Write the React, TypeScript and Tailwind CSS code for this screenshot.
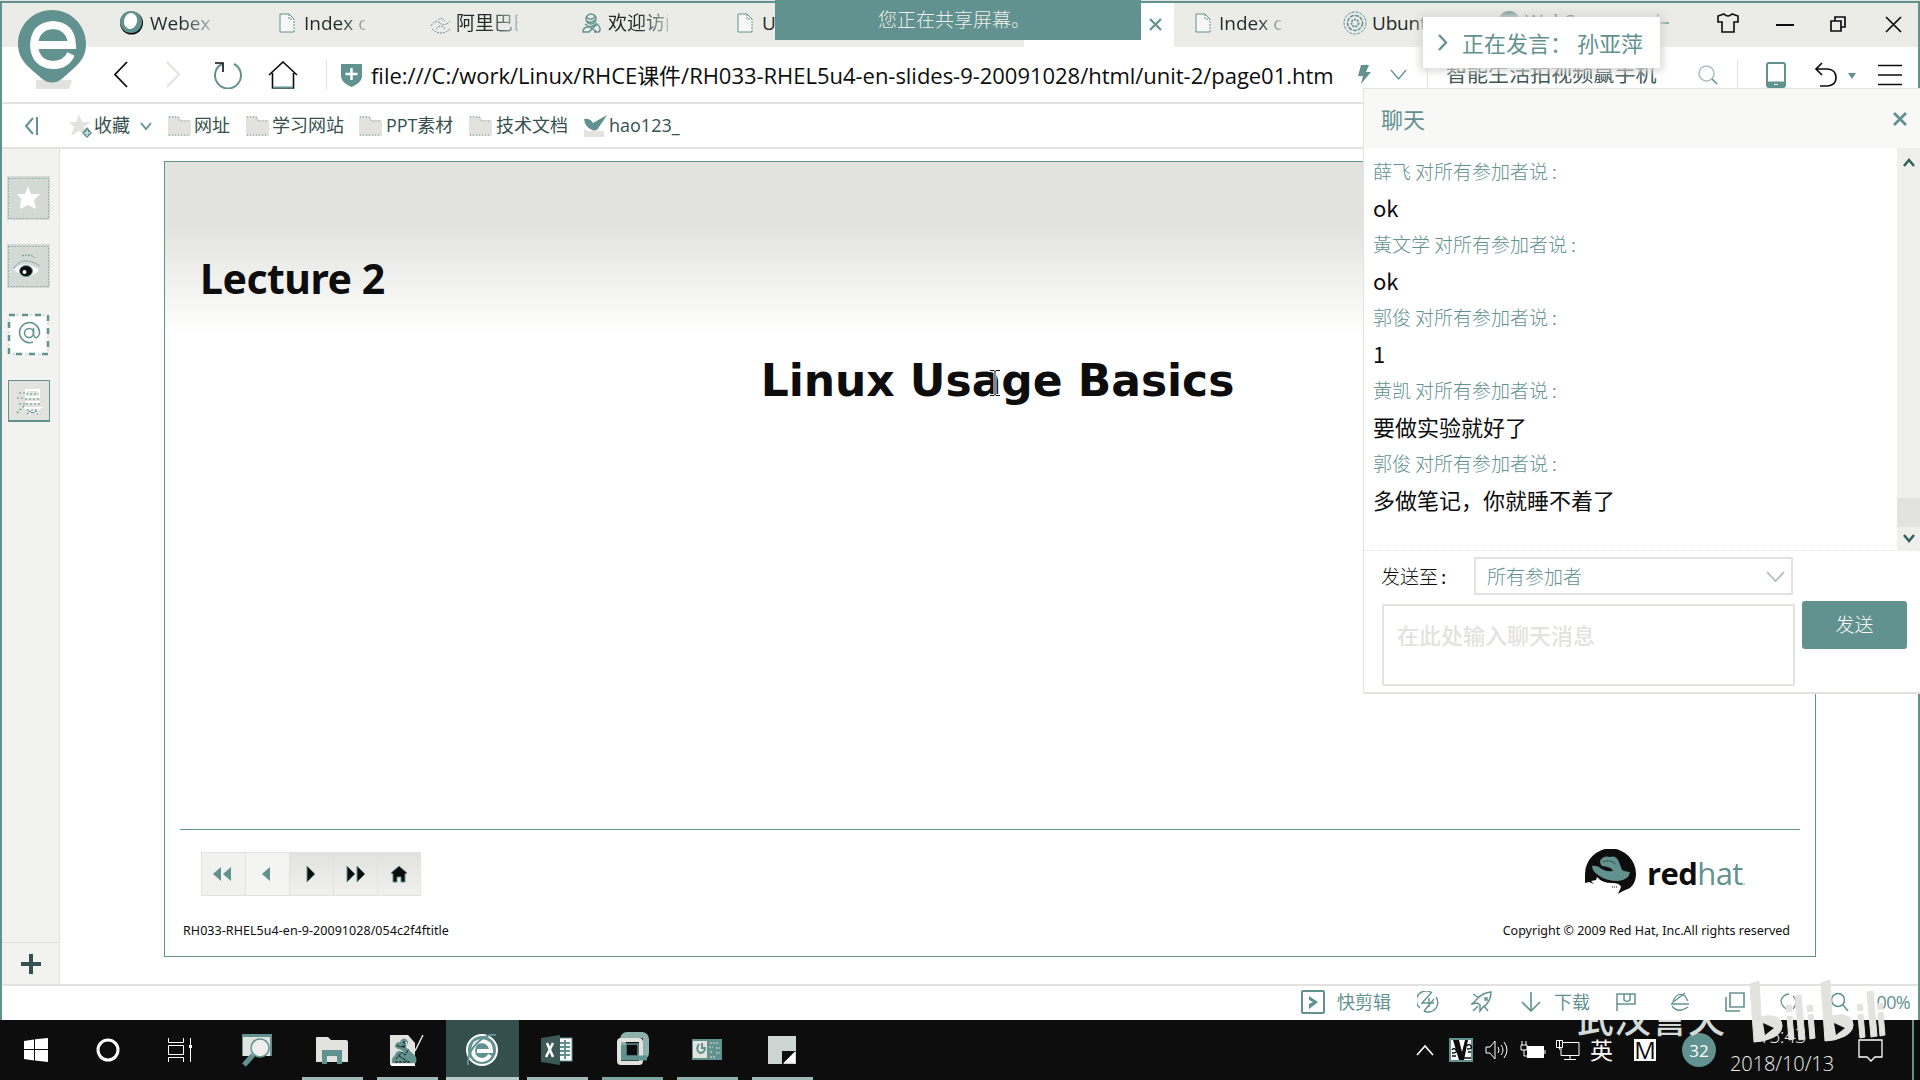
import React from "react";

const UI = "font-['Open_Sans','Noto_Sans_CJK_SC',sans-serif]";
const CJK = "font-['Noto_Sans_CJK_SC',sans-serif]";

const TEAL = "#61928f";
const PALE = "#e2e2de";
const INK = "#0d0d0d";

function Svg({ w, h, className = "", children }: { w: number; h: number; className?: string; children: React.ReactNode }) {
  return (
    <svg width={w} height={h} viewBox={`0 0 ${w} ${h}`} fill="none" className={`block shrink-0 ${className}`}>
      {children}
    </svg>
  );
}

function PageIcon({ className = "" }: { className?: string }) {
  return (
    <Svg w={16} h={20} className={className}>
      <path d="M1 1h9l5 5v13H1z" fill="#f7f7f6" />
      <path d="M1 1v18h14M1 1h9" stroke={TEAL} />
      <path d="M10 1v5h5v13" stroke={TEAL} strokeDasharray="2 1" />
      <path d="M10 1l5 5" stroke={TEAL} />
    </Svg>
  );
}

function Folder({ className = "" }: { className?: string }) {
  return (
    <Svg w={23} h={20} className={className}>
      <path d="M0 0h11l2 4h10v16H0z" fill={PALE} />
      <path d="M1 1h9l2 4h10M1 19h21" stroke={TEAL} strokeDasharray="1 2" />
    </Svg>
  );
}

function TabStrip() {
  return (
    <div className="flex h-[44px] shrink-0 items-stretch bg-[#ebebe8] text-[19px] text-[#1f2a29] whitespace-nowrap">
      <div className="ml-[117px] flex w-[159px] items-start">
        <Svg w={25} h={24} className="mt-[8px]">
          <circle cx="12.500" cy="12" r="11.500" fill={INK} />
          <circle cx="12" cy="11" r="11" fill={TEAL} />
          <ellipse cx="11.500" cy="10" rx="6.500" ry="8" fill="#fff" transform="rotate(15 11.500 10)" />
        </Svg>
        <span className="ml-[6px] mt-[7px] w-[61px] overflow-hidden bg-gradient-to-r from-[#1f2a29] from-50% to-[#a9bfbd] bg-clip-text leading-[26px] text-transparent">Webex</span>
      </div>
      <div className="flex w-[150px] items-start">
        <PageIcon className="ml-[1px] mt-[10px]" />
        <span className="ml-[9px] mt-[7px] w-[61px] overflow-hidden bg-gradient-to-r from-[#1f2a29] from-60% to-[#a9bfbd] bg-clip-text leading-[26px] text-transparent">Index of</span>
      </div>
      <div className="flex w-[153px] items-start">
        <Svg w={22} h={18} className="ml-[2px] mt-[14px]">
          <path d="M2 12q9 8 18 0M1 9q4-7 9-3t10-2M6 12q5-6 9 0M8 3q4-4 7 2" stroke={TEAL} strokeDasharray="2 1" />
        </Svg>
        <span className="ml-[4px] mt-[6px] w-[62px] overflow-hidden bg-gradient-to-r from-[#1f2a29] from-50% to-[#a9bfbd] bg-clip-text leading-[28px] text-transparent">阿里巴巴</span>
      </div>
      <div className="flex w-[156px] items-start">
        <Svg w={20} h={21} className="mt-[10px]">
          <circle cx="10" cy="6" r="5" stroke={TEAL} strokeWidth="1.500" />
          <path d="M5 4q5 5 10-1M6 8q4 3 8-1M4 11l12 8M16 10q-4 4-9 4-5 0-5 5h6l8-8q5 4 2 8h-5" stroke={TEAL} strokeWidth="1.500" />
        </Svg>
        <span className="ml-[7px] mt-[6px] w-[60px] overflow-hidden bg-gradient-to-r from-[#1f2a29] from-50% to-[#a9bfbd] bg-clip-text leading-[28px] text-transparent">欢迎访问</span>
      </div>
      <div className="flex w-[287px] items-start">
        <PageIcon className="mt-[10px]" />
        <span className="ml-[9px] mt-[7px] leading-[26px]">U</span>
      </div>
      <div className="flex w-[150px] items-start justify-end bg-white">
        <Svg w={13} h={13} className="mr-[12px] mt-[15px]">
          <path d="M1 1l11 11M12 1L1 12" stroke={TEAL} strokeWidth="2.200" />
        </Svg>
      </div>
      <div className="flex w-[168px] items-start">
        <PageIcon className="ml-[21px] mt-[10px]" />
        <span className="ml-[8px] mt-[7px] w-[62px] overflow-hidden bg-gradient-to-r from-[#1f2a29] from-60% to-[#a9bfbd] bg-clip-text leading-[26px] text-transparent">Index of</span>
      </div>
      <div className="flex w-[156px] items-start">
        <Svg w={24} h={24} className="mt-[8px] ml-[1px]">
          <circle cx="12" cy="12" r="11" stroke={TEAL} strokeDasharray="3 1" />
          <circle cx="12" cy="12" r="7.500" stroke={TEAL} strokeWidth="1.500" strokeDasharray="4 1" />
          <circle cx="12" cy="12" r="3.500" stroke={TEAL} strokeWidth="2" strokeDasharray="2 1" />
        </Svg>
        <span className="ml-[5px] mt-[7px] leading-[26px] tracking-[-0.200px]">Ubunt</span>
      </div>
      <div className="flex w-[155px] items-start">
        <Svg w={22} h={22} className="mt-[8px]">
          <circle cx="11" cy="11" r="11" fill={TEAL} />
        </Svg>
        <span className="ml-[5px] mt-[5px] leading-[26px]">WebSer</span>
      </div>
      <Svg w={16} h={20} className="mt-[8px]">
        <path d="M0 12h16M5 3v17" stroke={TEAL} strokeWidth="1.500" />
      </Svg>
      <Svg w={22} h={20} className="ml-[48px] mt-[10px]">
        <path d="M7 1q4 4 8 0l6 2v6h-4v10H5V9H1V3z" stroke={INK} strokeWidth="1.600" />
      </Svg>
      <Svg w={18} h={20} className="ml-[37px] mt-[12px]">
        <path d="M0 10h18" stroke={INK} strokeWidth="2" />
      </Svg>
      <Svg w={16} h={16} className="ml-[36px] mt-[13px]">
        <path d="M1 5h10v10H1zM5 5V1h10v10h-4" stroke={INK} strokeWidth="1.700" />
      </Svg>
      <Svg w={17} h={17} className="ml-[39px] mt-[13px]">
        <path d="M1 1l15 15M16 1L1 16" stroke={INK} strokeWidth="1.700" />
      </Svg>
    </div>
  );
}

function AddressBar() {
  return (
    <div className="flex h-[57px] shrink-0 items-center border-b-2 border-[#e2e2de] bg-white whitespace-nowrap">
      <Svg w={15} h={27} className="ml-[111px]">
        <path d="M14 1L2 13.500L14 26" stroke={INK} strokeWidth="1.800" />
      </Svg>
      <Svg w={15} h={27} className="ml-[38px]">
        <path d="M1 1l12 12.500L1 26" stroke={PALE} strokeWidth="2" />
      </Svg>
      <Svg w={30} h={28} className="ml-[32px]">
        <path d="M9 3A13 13 0 1 0 21 3" stroke={TEAL} strokeWidth="2" />
        <path d="M2 2h8v9" stroke={INK} strokeWidth="1.600" />
      </Svg>
      <Svg w={30} h={28} className="ml-[25px]">
        <path d="M1 14L15 1l14 13M4.500 12v15h21V12" stroke={INK} strokeWidth="1.600" />
        <path d="M5 26.500h20" stroke={TEAL} strokeWidth="2" />
      </Svg>
      <div className="ml-[28px] h-[30px] w-px bg-[#e2e2de]" />
      <Svg w={21} h={24} className="ml-[14px]">
        <path d="M0 1h21v13q-1 6-10.500 10Q1 20 0 14z" fill={TEAL} />
        <path d="M10.500 5v12M4.500 11h12" stroke="#fff" strokeWidth="2.500" />
      </Svg>
      <span className="ml-[9px] w-[986px] text-[22px] leading-[30px] tracking-[-0.030px] text-[#0d0d0d]">
        file:///C:/work/Linux/RHCE课件/RH033-RHEL5u4-en-slides-9-20091028/html/unit-2/page01.htm
      </span>
      <Svg w={15} h={20}>
        <path d="M4 0h8L9 7h5L4 19l2-8H1z" fill={TEAL} />
      </Svg>
      <Svg w={17} h={12} className="ml-[18px]">
        <path d="M1 1l7.500 9L16 1" stroke={TEAL} strokeWidth="1.300" />
      </Svg>
      <div className="ml-[20px] h-[30px] w-px bg-[#e2e2de]" />
      <span className="ml-[18px] w-[231px] text-[21px] leading-[28px] tracking-[0.050px] text-[#3d5554]">
        <span className="relative -top-[2px]">智能生活拍视频赢手机</span>
      </span>
      <Svg w={20} h={20} className="ml-[21px]">
        <circle cx="8.500" cy="8.500" r="7.500" stroke="#a9bfbd" strokeWidth="1.500" />
        <path d="M14 14l5 5" stroke={TEAL} strokeWidth="1.600" />
      </Svg>
      <div className="ml-[19px] h-[30px] w-px bg-[#e2e2de]" />
      <Svg w={20} h={26} className="ml-[28px]">
        <rect x="1" y="1" width="18" height="24" rx="2" stroke={TEAL} strokeWidth="2" />
        <path d="M1 22h18" stroke={TEAL} strokeWidth="5" />
        <path d="M8 22.500h4" stroke="#fff" />
      </Svg>
      <Svg w={24} h={25} className="ml-[28px]">
        <path d="M8 1L2 7l6 6M2 7h12q8 1 8 8.500T14 24H6" stroke={INK} strokeWidth="1.700" />
      </Svg>
      <Svg w={8} h={7} className="ml-[10px] mt-[4px]">
        <path d="M0 0h8L4 6z" fill={TEAL} />
      </Svg>
      <Svg w={24} h={22} className="ml-[22px]">
        <path d="M0 1.500h24M0 11h24M0 20.500h24" stroke={INK} strokeWidth="1.700" />
      </Svg>
    </div>
  );
}

function Bookmarks() {
  return (
    <div className="flex h-[45px] shrink-0 items-center border-b-2 border-[#e2e2de] bg-white text-[18px] whitespace-nowrap text-[#35504e]">
      <Svg w={15} h={18} className="ml-[22px]">
        <path d="M9 1L2 9l7 8" stroke={TEAL} strokeWidth="2" />
        <path d="M13 0v18" stroke={TEAL} strokeWidth="2" />
      </Svg>
      <Svg w={24} h={24} className="ml-[30px]">
        <path d="M10 0l3 8h9l-7 5 3 9-8-5-8 5 3-9-5-5h7z" fill={PALE} />
        <path d="M18 13l5 6-5 5-5-5z" fill={TEAL} />
        <path d="M18 16v6M15 19h6" stroke="#fff" />
      </Svg>
      <span className="ml-[1px] w-[37px]">收藏</span>
      <Svg w={12} h={9} className="ml-[9px] mt-[2px]">
        <path d="M1 1l5 6 5-6" stroke={TEAL} strokeWidth="1.800" />
      </Svg>
      <Folder className="ml-[16px]" />
      <span className="ml-[3px] w-[37px]">网址</span>
      <Folder className="ml-[15px]" />
      <span className="ml-[3px] w-[73px]">学习网站</span>
      <Folder className="ml-[14px]" />
      <span className="ml-[4px] w-[68px] tracking-[-0.100px]">PPT素材</span>
      <Folder className="ml-[15px]" />
      <span className="ml-[4px] w-[73px]">技术文档</span>
      <Svg w={24} h={22} className="ml-[14px]">
        <path d="M1 14l3 2h17v6H1z" fill={PALE} />
        <path d="M1 4q6-1 9 4L24 0q-3 5-6 9l-2 3q-2 5-7 3Q2 12 1 4z" fill={TEAL} />
      </Svg>
      <span className="ml-[2px]">hao123_</span>
    </div>
  );
}

function Sidebar() {
  return (
    <div className="flex w-[58px] shrink-0 flex-col items-start border-r border-[#e2e2de] bg-[#f2f2f0] pl-[5px]">
      <Svg w={44} h={44} className="mt-[27px]">
        <rect width="43" height="44" fill="#d3dad6" />
        <rect x="1.500" y="2.500" width="40" height="40" stroke={TEAL} strokeDasharray="1 2" />
        <path d="M21 10l3 8h9l-6 6 2 9-8-4-8 4 1-10-4-5h8z" fill="#fff" />
      </Svg>
      <Svg w={44} h={44} className="mt-[24px]">
        <rect width="43" height="44" fill="#d3dad6" />
        <rect x="1.500" y="2.500" width="40" height="40" stroke={TEAL} strokeDasharray="1 2" />
        <path d="M7 26q10-11 25 0-10 12-25 0z" fill="#fff" />
        <path d="M7 24q8-13 26-2M15 12q9-3 14 3" stroke={TEAL} strokeDasharray="2 1" />
        <ellipse cx="19" cy="27" rx="6.500" ry="5.500" fill={INK} stroke={TEAL} />
        <circle cx="17.500" cy="28" r="2" fill="#fff" />
      </Svg>
      <Svg w={44} h={44} className="mt-[24px]">
        <rect x="2" y="3" width="39" height="39" fill="#fff" stroke={TEAL} strokeWidth="2.500" strokeDasharray="6 7" />
        <rect x="2" y="3" width="39" height="39" stroke={PALE} strokeWidth="2.500" strokeDasharray="3 10" strokeDashoffset="-7" />
        <circle cx="22" cy="21" r="4.500" stroke={TEAL} strokeWidth="1.500" />
        <path d="M26.500 16v7q3 6 6-1V20A10 10 0 1 0 26 30" stroke={TEAL} strokeWidth="1.500" />
      </Svg>
      <Svg w={44} h={44} className="mt-[23px]">
        <rect x="1.500" y="1.500" width="41" height="41" fill="#e2e2de" stroke={TEAL} />
        <path d="M1 42h42" stroke={TEAL} strokeWidth="2" />
        <path d="M19 11h13v7H19zM19 23h14M17 29h16l-12 7M20 29l12 7" stroke="#fff" strokeWidth="2" />
        <path d="M12 14h6M10 19h7M12 25h6M10 34l7-7M19 15h13M18 20h15M19 25h14M20 31h12M20 35l10-3M22 32l11 4" stroke={TEAL} strokeWidth="1.200" strokeDasharray="2 2" />
      </Svg>
      <div className="-ml-[5px] mt-auto flex h-[42px] w-[57px] items-center border-t border-[#e2e2de] pl-[19px]">
        <Svg w={20} h={20}>
          <path d="M10 0v20M0 10h20" stroke="#35504e" strokeWidth="4" />
        </Svg>
      </div>
    </div>
  );
}

function Slide() {
  return (
    <div className="mt-[12px] ml-[104px] flex h-[796px] w-[1652px] flex-col border border-[#61928f] bg-white">
      <div className="flex h-[175px] items-start bg-gradient-to-b from-[#e2e2de] from-35% to-white pl-[35px]">
        <h1 className="mt-[86px] font-['Noto_Sans'] text-[41px] leading-[60px] font-bold tracking-[-0.500px] whitespace-nowrap text-[#0d0d0d]">Lecture 2</h1>
      </div>
      <h2 className="mt-[14px] pl-[15px] text-center font-['DejaVu_Sans'] text-[44px] leading-[60px] font-bold tracking-[-0.050px] whitespace-nowrap text-[#0d0d0d]">
        Linux Usage Basics
      </h2>
      <div className="mx-[15px] mt-auto h-px bg-[#61928f]" />
      <div className="mt-[18px] flex justify-between">
        <div className="mt-[4px] ml-[36px] flex h-[44px] w-[220px] gap-[1px] bg-[#e2e2de] p-[1px]">
          <div className="flex w-[43px] items-center justify-center bg-[#f1f1ef] pr-[3px]">
            <Svg w={18} h={14}><path d="M8 0v14L0 7zM18 0v14l-8-7z" fill={TEAL} /></Svg>
          </div>
          <div className="flex w-[43px] items-center justify-center bg-[#f4f4f2] pr-[3px]">
            <Svg w={8} h={14}><path d="M8 0v14L0 7z" fill={TEAL} /></Svg>
          </div>
          <div className="flex w-[43px] items-center justify-center bg-gradient-to-b from-[#e2e2de] to-[#f0f0ee] pr-[2px]">
            <Svg w={10} h={16}><path d="M1 0v16l8-8z" fill={INK} stroke={TEAL} /></Svg>
          </div>
          <div className="flex w-[43px] items-center justify-center bg-gradient-to-b from-[#e2e2de] to-[#f0f0ee]">
            <Svg w={20} h={16}><path d="M1 0v16l8-8zM11 0v16l8-8z" fill={INK} stroke={TEAL} /></Svg>
          </div>
          <div className="flex w-[42px] items-center justify-center bg-gradient-to-b from-[#e2e2de] to-[#f0f0ee]">
            <Svg w={18} h={18}><path d="M9 1l8 7-2 1v8h-4v-5H7v5H3V9L1 8z" fill={INK} stroke={TEAL} /></Svg>
          </div>
        </div>
        <div className="mr-[74px] flex h-[48px] items-start">
          <Svg w={52} h={46} className="mt-[1px]">
            <path d="M0 34V25A25.500 25.500 0 0 1 51 25q0 9-6 14l-7 3-5 3 3-7q-1-4-9-4-10 0-15-6l-1 3-5 1 3 3-5-2z" fill={INK} />
            <path d="M15 12q3-6 10-4 6-2 9 5l3 8q4 2 8 2-1 8-12 9-12 0-20-6-6-4-6-9 3-1 7 1 5 5 14 4-1-4-11-5-2-2-2-5z" fill={TEAL} />
            <path d="M18 13q6-3 13 2M27 38h6" stroke={INK} strokeWidth="1" strokeDasharray="1 1" />
          </Svg>
          <div className="mt-[3px] ml-[10px] w-[94px] font-['Open_Sans'] text-[31px] leading-[44px] tracking-[-0.600px] whitespace-nowrap">
            <span className="font-bold text-[#0d0d0d]">red</span>
            <span className="text-[#61928f]">hat</span>
            <span className="text-[10px] text-[#61928f]">.</span>
          </div>
        </div>
      </div>
      <div className="mt-[23px] mb-[13px] flex justify-between pr-[25px] pl-[18px] font-['Noto_Sans'] text-[12.500px] leading-[24px] whitespace-nowrap text-[#0d0d0d]">
        <span className="tracking-[0.050px]">RH033-RHEL5u4-en-9-20091028/054c2f4ftitle</span>
        <span>Copyright © 2009 Red Hat, Inc.All rights reserved</span>
      </div>
    </div>
  );
}

function StatusBar() {
  return (
    <div className="flex h-[36px] shrink-0 items-center border-t-2 border-[#e2e2de] bg-white pb-[2px] text-[18px] whitespace-nowrap text-[#61928f]">
      <Svg w={24} h={24} className="ml-[1299px]">
        <rect x="1" y="1" width="22" height="22" rx="1" stroke={TEAL} strokeWidth="2" />
        <path d="M8 6l9 6-9 7v-5l4-2-4-2z" fill={TEAL} />
      </Svg>
      <span className="ml-[12px] w-[56px]">快剪辑</span>
      <Svg w={22} h={22} className="ml-[24px]">
        <path d="M15 2A9.500 9.500 0 0 0 3 17M19 6A9.500 9.500 0 0 1 7 20M15 1L5 12h7M7 20l10-12M12 7v9M9 12h8" stroke={TEAL} strokeWidth="1.400" />
      </Svg>
      <Svg w={22} h={22} className="ml-[32px]">
        <path d="M6 8Q11 2 20 1q0 10-8 15l-3 4v-6l-3-2-5 1 5-5M7 15l-5 5M14 7h2v2h-2zM2 3l6 4M13 15l4 5" stroke={TEAL} strokeWidth="1.500" />
      </Svg>
      <Svg w={20} h={20} className="ml-[28px]">
        <path d="M10 0v18M1 10l9 9 9-9" stroke={TEAL} strokeWidth="1.600" />
      </Svg>
      <span className="ml-[13px] w-[38px]">下载</span>
      <Svg w={20} h={18} className="ml-[24px]">
        <path d="M1 18V1h18v10H1M8 1v6q3 3 6 0V1" stroke={TEAL} strokeWidth="1.500" />
      </Svg>
      <Svg w={22} h={20} className="ml-[33px]">
        <path d="M19 15Q9 22 3 14M4 9Q9-1 16 4l3 5M2 12h18M3 11L16 1" stroke={TEAL} strokeWidth="1.300" />
      </Svg>
      <Svg w={20} h={20} className="ml-[34px]">
        <path d="M5 1h14v14H5zM1 5v14h14" stroke={TEAL} strokeWidth="1.600" />
      </Svg>
      <Svg w={22} h={20} className="ml-[35px]">
        <path d="M9 2Q2 3 1 9q1 7 8 9M13 4q6 6 0 13" stroke={TEAL} strokeWidth="1.300" />
      </Svg>
      <Svg w={20} h={20} className="ml-[28px]">
        <circle cx="8" cy="8" r="6.500" stroke={TEAL} strokeWidth="1.500" />
        <path d="M13 13l5 6" stroke={TEAL} strokeWidth="1.500" />
      </Svg>
      <span className="ml-[17px] tracking-[-0.700px]">100%</span>
    </div>
  );
}

const messages = [
  { from: "薛飞", text: "ok" },
  { from: "黃文学", text: "ok" },
  { from: "郭俊", text: "1" },
  { from: "黄凯", text: "要做实验就好了" },
  { from: "郭俊", text: "多做笔记，你就睡不着了" },
];

function ChatPanel() {
  return (
    <div className="absolute top-[88px] left-[1363px] flex h-[606px] w-[557px] flex-col border-b-2 border-l border-t border-[#e2e2de] bg-white font-['Noto_Sans_CJK_SC',sans-serif]">
      <div className="flex h-[59px] shrink-0 items-center justify-between bg-[#f8f8f7] pr-[13px] pl-[17px]">
        <span className="-mt-[1px] text-[22px] leading-[30px] text-[#61928f]">聊天</span>
        <Svg w={14} h={14} className="mt-[1px]">
          <path d="M1 1l12 12M13 1L1 13" stroke={TEAL} strokeWidth="2.800" />
        </Svg>
      </div>
      <div className="flex h-[402px] shrink-0">
        <div className="flex flex-1 flex-col pt-[5px] pl-[9px] whitespace-nowrap">
          {messages.map((m, i) => (
            <div key={i} className="h-[73px] shrink-0">
              <div className="h-[36px] text-[19px] leading-[36px] font-light text-[#61928f]">
                {m.from}
                <span className="ml-[4px]">对所有参加者说</span>
                <span className="ml-[4px]">:</span>
              </div>
              <div className="h-[37px] text-[22px] leading-[37px] text-[#0d0d0d]">{m.text}</div>
            </div>
          ))}
        </div>
        <div className="flex w-[23px] flex-col items-center bg-[#efefed]">
          <Svg w={12} h={9} className="mt-[10px]">
            <path d="M1 8l5-6 5 6" stroke="#35605d" strokeWidth="2.500" />
          </Svg>
          <div className="mt-auto h-[29px] w-full bg-[#e2e2de]" />
          <Svg w={12} h={9} className="mt-[7px] mb-[7px]">
            <path d="M1 1l5 6 5-6" stroke="#35605d" strokeWidth="2.500" />
          </Svg>
        </div>
      </div>
      <div className="border-t border-dotted border-[#e2e2de] pt-[6px] pl-[18px] text-[19px] whitespace-nowrap">
        <div className="flex h-[38px] items-center">
          <span className="w-[92px] text-[#0d0d0d]"><span className="-ml-[1px] font-light">发送至</span><span className="ml-[3px]">:</span></span>
          <div className="flex h-[38px] w-[319px] items-center justify-between border-2 border-[#e2e2de] pr-[6px] pl-[11px]">
            <span className="font-light text-[#61928f]">所有参加者</span>
            <Svg w={19} h={11}>
              <path d="M1 1l8.500 9L18 1" stroke="#a9bfbd" strokeWidth="1.800" />
            </Svg>
          </div>
        </div>
        <div className="mt-[6px] flex items-start">
          <div className="mt-[3px] flex h-[82px] w-[413px] items-start rounded-[2px] border-2 border-[#e2e2de] pt-[12px] pl-[13px] text-[22px] leading-[32px] font-medium text-[#e2e2de]">
            在此处输入聊天消息
          </div>
          <div className="ml-[7px] flex h-[48px] w-[105px] items-center justify-center rounded-[3px] bg-[#61928f] pb-[1px] font-light text-white">发送</div>
        </div>
      </div>
    </div>
  );
}

function Watermark() {
  return (
    <div className="pointer-events-none absolute top-[980px] left-[1577px] flex items-start">
      <div className="mt-[40px] h-[24px] w-[153px] overflow-hidden">
        <div className={`-mt-[31px] text-[37px] leading-[56px] font-medium whitespace-nowrap text-[#d3dad7] ${CJK}`}>武汉誉天</div>
      </div>
      <Svg w={136} h={64} className="ml-[20px]">
        <g fill={PALE} stroke={PALE} strokeLinejoin="round">
          <path d="M0 4l9-3 2 36q14-4 20 4 4 10-7 16-10 5-20 5z" />
          <path d="M71 3l9-3 2 36q14-4 20 4 4 10-7 16-10 5-20 5z" />
          <path d="M37 37l5-1 2 23-5 1zM45 16l6-1 4 44-6 1zM58 35l5-1 2 24-5 1zM36 26l5-1 1 6-5 1zM57 26l5-1 1 6-5 1zM108 35l5-1 2 23-5 1zM117 12l6-1 4 45-6 1zM128 33l5-1 2 23-5 1zM107 25l5-1 1 6-5 1zM127 24l5-1 1 6-5 1z" />
        </g>
        <path d="M13 43l11 5-9 7zM84 43l11 5-9 7z" fill={INK} />
      </Svg>
    </div>
  );
}

function Taskbar() {
  return (
    <div className="flex h-[60px] w-full shrink-0 items-stretch bg-[#0d0d0d] text-white">
      <div className="flex w-[295px] items-center">
        <Svg w={24} h={24} className="ml-[24px]">
          <path d="M0 3l10-1.500V11H0zM11 1.300L24 0v11H11zM0 12h10v10.500L0 21zM11 12h13v12l-13-1.500z" fill="#fff" />
        </Svg>
        <Svg w={24} h={24} className="ml-[48px]">
          <circle cx="12" cy="12" r="10" stroke="#fff" strokeWidth="3" />
        </Svg>
        <Svg w={26} h={24} className="ml-[48px]">
          <path d="M.5 0v4.500h15V0M.5 24v-4.500h15V24M.5 7.500h15v9H.5zM22.500 0v24" stroke="#fff" />
          <rect x="21" y="7" width="3" height="3" fill="#fff" />
        </Svg>
        <Svg w={32} h={34} className="ml-[48px]">
          <rect x="0" y="1" width="30" height="22" fill={TEAL} />
          <rect x="1" y="4" width="27" height="19" fill={PALE} />
          <circle cx="18" cy="15" r="9" fill="#eeeeec" stroke={TEAL} strokeWidth="1.500" />
          <path d="M11 22L2 32" stroke={TEAL} strokeWidth="5" />
        </Svg>
      </div>
      <div className="ml-[7px] flex w-[61px] flex-col items-center justify-between">
        <Svg w={32} h={28} className="mt-[16px] mr-[2px]">
          <path d="M0 2q0-1 1-1h11l3 3h15q2 0 2 2v20H0z" fill={PALE} />
          <path d="M6 28V14h20v14h-5v-8H11v8z" fill={TEAL} />
        </Svg>
        <div className="h-[3px] w-full bg-[#a2bab7]" />
      </div>
      <div className="ml-[14px] flex w-[61px] flex-col items-center justify-between">
        <Svg w={34} h={32} className="mt-[15px] mr-[1px]">
          <path d="M0 0h18l7 8v22H0z" fill={PALE} />
          <path d="M5 12q0-5 5-5 2-5 6-3 4 3 0 8l5 5q7 4 5 11H2q-1-5 3-8 1-4 5-4z" fill={TEAL} />
          <path d="M7 10q3 3 7 1M6 24l6-7 3 3 4-6M14 6v7M5 27h15M9 21l8 5" stroke={INK} strokeDasharray="3 1" />
          <path d="M8 14l5 3M16 7l2 6" stroke="#fff" />
          <path d="M33 0l-8 16" stroke={PALE} strokeWidth="1.500" />
          <path d="M1 30h24" stroke="#fff" strokeWidth="2" />
        </Svg>
        <div className="h-[3px] w-full bg-[#a2bab7]" />
      </div>
      <div className="ml-[8px] flex w-[73px] flex-col items-center justify-between bg-[#354f4d]">
        <Svg w={34} h={34} className="mt-[13px] mr-[2px]">
          <circle cx="17" cy="17" r="15" fill={TEAL} stroke="#fff" strokeWidth="2" />
          <path d="M25 22q-3 5-8.500 5Q8 26 8 17q1-9 9-9 9 1 9 10H12" stroke="#fff" strokeWidth="4" />
          <path d="M3 32Q2 20 12 10T31 2" stroke={TEAL} strokeWidth="2" />
        </Svg>
        <div className="h-[3px] w-full bg-[#b8cac7]" />
      </div>
      <div className="ml-[8px] flex w-[61px] flex-col items-center justify-between">
        <Svg w={32} h={30} className="mt-[15px] mr-[2px]">
          <rect x="16" y="3" width="15" height="23" fill="#fff" stroke={TEAL} />
          <path d="M18 8h11M18 12h11M18 16h11M18 20h11M24 5v19" stroke={TEAL} strokeWidth="2" />
          <path d="M0 3l19-3v30L0 27z" fill="#3c5957" />
          <path d="M6 8l6 14M12 8L5 22" stroke="#fff" strokeWidth="2.500" />
        </Svg>
        <div className="h-[3px] w-full bg-[#a2bab7]" />
      </div>
      <div className="ml-[14px] flex w-[61px] flex-col items-center justify-between">
        <Svg w={32} h={34} className="mt-[12px]">
          <rect x="6" y="3" width="23" height="22" rx="4" stroke="#8fb0ad" strokeWidth="6" />
          <rect x="2" y="8" width="22" height="23" rx="2" stroke={PALE} strokeWidth="4" />
          <path d="M6.500 28V13M4 26h26" stroke={TEAL} strokeWidth="5" />
          <rect x="9" y="12" width="12" height="12" fill={INK} stroke={TEAL} strokeWidth="1.500" />
        </Svg>
        <div className="h-[3px] w-full bg-[#7fa5a2]" />
      </div>
      <div className="ml-[14px] flex w-[61px] flex-col items-center justify-between">
        <Svg w={32} h={24} className="mt-[18px] mr-[2px]">
          <rect x="1" y="1" width="30" height="21" fill={TEAL} />
          <rect x="2" y="3" width="14" height="17" fill={PALE} />
          <path d="M8 6q-4 6 1 9 4 0 5-4M11 5v5h4" stroke={TEAL} strokeWidth="2" />
          <path d="M19 5h9M18 9h4M25 10h4M19 14h3M25 15h4M19 19h6" stroke={PALE} strokeDasharray="2 1" />
        </Svg>
        <div className="h-[3px] w-full bg-[#8fb0ad]" />
      </div>
      <div className="ml-[14px] flex w-[61px] flex-col items-center justify-between">
        <Svg w={28} h={28} className="mt-[16px] mr-[1px]">
          <path d="M0 0h28v28H0z" fill="#cdd6d2" />
          <path d="M14 15h14L15 28h-1z" fill={INK} />
          <path d="M27 15.500L15.500 27H27z" fill="#fff" />
        </Svg>
        <div className="h-[3px] w-full bg-[#a2bab7]" />
      </div>
      <div className="ml-auto flex items-center whitespace-nowrap">
        <Svg w={18} h={12}><path d="M1 11l8-9 8 9" stroke="#fff" strokeWidth="1.600" /></Svg>
        <Svg w={24} h={24} className="ml-[15px]">
          <rect x="1" y="1" width="22" height="22" fill="#fff" stroke={TEAL} strokeWidth="2" />
          <path d="M4 2h6l3 12 3-12h3l-4 20h-5z" fill={INK} />
          <path d="M3 12q2-3 4 0t-4 3M3 18h4M18 8q2-3 4 0t-4 3M19 14h3M14 20h8" stroke={INK} strokeWidth="1.500" />
        </Svg>
        <Svg w={24} h={20} className="ml-[12px]">
          <path d="M1 7h4l5-6v18l-5-6H1z" stroke="#fff" />
          <path d="M13 7q2 3 0 6M16 5q4 5 0 10M19 2q6 8 0 16" stroke="#fff" />
        </Svg>
        <Svg w={26} h={20} className="ml-[11px]">
          <path d="M2 1v4M6 1v4M1 5h6v5H1zM4 10v6h3" stroke="#fff" />
          <rect x="7.500" y="6.500" width="16" height="11" fill="#fff" stroke="#fff" />
          <path d="M25 10v4" stroke="#fff" />
        </Svg>
        <Svg w={25} h={22} className="ml-[9px]">
          <path d="M8 3.500h16v13H6V9M1.500 1.500h6v7h-6zM4.500 1.500v9M15 16v4M9 20.500h12" stroke="#fff" />
        </Svg>
        <span className="ml-[10px] w-[23px] pb-[1px] text-[23px] leading-[28px]">英</span>
        <div className="ml-[21px] flex h-[22px] w-[22px] items-center justify-center overflow-hidden bg-white font-['Open_Sans'] text-[24px] leading-[22px] text-[#0d0d0d]">M</div>
        <div className="ml-[26px] flex h-[34px] w-[34px] items-center justify-center rounded-full bg-[#61928f] font-['Open_Sans'] text-[17px] leading-none">32</div>
        <div className="ml-[13px] flex w-[110px] flex-col items-center pr-[4px] font-['Open_Sans'] text-[20px] leading-[28px] font-light text-[#eeeeec]">
          <span className="tracking-[-0.500px]">15:43</span>
          <span className="tracking-[-0.100px]">2018/10/13</span>
        </div>
        <Svg w={26} h={26} className="mt-[2px] ml-[19px]">
          <path d="M1 2h23v17h-7l-4 4-4-4H1z" stroke="#fff" strokeWidth="1.300" />
        </Svg>
        <div className="ml-[28px] h-[60px] w-[2px] bg-[#61928f]" />
        <div className="w-[6px]" />
      </div>
    </div>
  );
}

export default function App() {
  return (
    <div className={`relative flex h-[1080px] w-[1920px] flex-col overflow-hidden bg-white ${UI}`}>
      <div className="h-px shrink-0 bg-[#e2e2de]" />
      <div className="flex h-[1019px] shrink-0 flex-col border-x-2 border-t-2 border-[#61928f]">
        <TabStrip />
        <AddressBar />
        <Bookmarks />
        <div className="flex min-h-0 flex-1">
          <Sidebar />
          <Slide />
        </div>
        <StatusBar />
      </div>
      <Taskbar />

      <Svg w={72} h={84} className="absolute top-[8px] left-[17px]">
        <path d="M19 72h36l-3 9H19z" fill={PALE} />
        <path d="M35 2c19 0 34 15 34 34 0 18-13 24-23 34q-11 9-22 0C15 61 1 54 1 36 1 17 16 2 35 2z" fill={TEAL} />
        <path d="M54 46q-5 11-18 11-18-1-19-20 1-19 19-20 18 1 19 20H20" stroke="#fff" strokeWidth="8" />
      </Svg>

      <div className="absolute top-0 left-[775px] flex h-[40px] w-[366px] items-center bg-[#61928f] pb-[1px] pl-[103px] font-['Noto_Sans_CJK_SC',sans-serif] text-[19px] font-light text-[#eeeeec]">
        您正在共享屏幕。
      </div>

      <ChatPanel />

      <div className="absolute top-[17px] left-[1423px] flex h-[51px] w-[237px] items-center bg-white shadow-[0_0_8px_3px_#d8d8d4] font-['Noto_Sans_CJK_SC',sans-serif] text-[22px] whitespace-nowrap text-[#61928f]">
        <Svg w={10} h={17} className="ml-[15px]">
          <path d="M1 1l7 7.500L1 16" stroke={TEAL} strokeWidth="2.300" />
        </Svg>
        <span className="ml-[14px] w-[115px] pb-[1px]">正在发言：</span>
        <span className="pb-[1px]">孙亚萍</span>
      </div>

      <Svg w={14} h={28} className="absolute top-[369px] left-[988px]">
        <path d="M2 1.500h4l1 1 1-1h4M2 26.500h4l1-1 1 1h4M7 2v24" stroke="#fff" strokeWidth="3" />
        <path d="M2 1.500h4l1 1 1-1h4M2 26.500h4l1-1 1 1h4M7 2v24" stroke={INK} />
      </Svg>

      <Watermark />
    </div>
  );
}
